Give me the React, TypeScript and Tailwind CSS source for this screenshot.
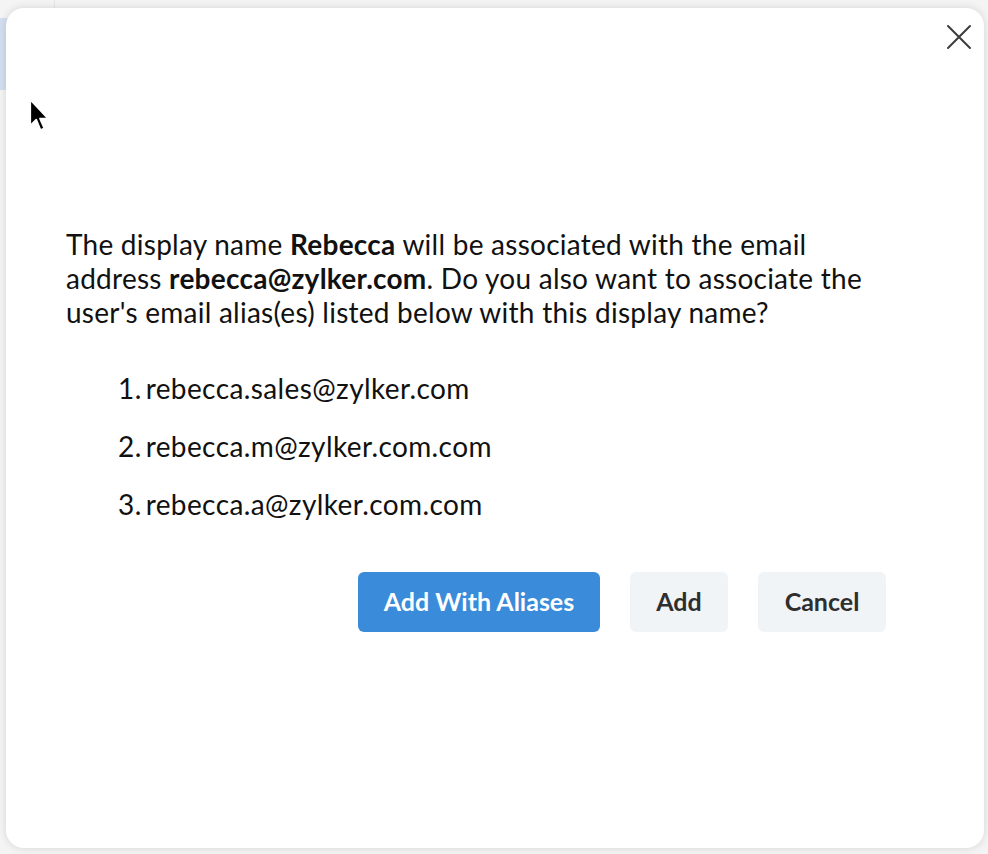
const aliases = [
  "rebecca.sales@zylker.com",
  "rebecca.m@zylker.com.com",
  "rebecca.a@zylker.com.com",
];

function Cursor() {
  return (
    <svg width="26" height="40" viewBox="0 0 24 36" className="absolute left-[27px] top-[97px]">
      <path
        d="M3 2 L3 26 L8.5 20.5 L12.5 30 L16 28.5 L12 19.5 L19.5 19.5 Z"
        fill="#000"
        stroke="#fff"
        strokeWidth="1.6"
        strokeLinejoin="round"
      />
    </svg>
  );
}

export default function App() {
  return (
    <div
      className="relative h-[854px] w-[988px] overflow-hidden bg-[#f4f4f4] pl-[6px] pt-[8px]"
      style={{ fontFamily: "Lato, 'Noto Sans', sans-serif" }}
    >
      {/* app behind the dialog */}
      <div className="absolute left-0 top-[18px] h-[72px] w-[10px] bg-[#d3dff0]" />
      <div className="absolute left-[54px] top-0 h-[10px] w-px bg-[#e6e6e6]" />

      <div className="relative flex h-[840px] w-[978px] flex-col rounded-[18px] bg-white shadow-[0_0_8px_rgba(0,0,0,0.13)]">
        <button className="absolute left-[940px] top-[16px]" aria-label="Close">
          <svg width="26" height="26" viewBox="0 0 26 26" fill="none" stroke="#3c3c3c" strokeWidth="2" strokeLinecap="round">
            <path d="M2 2 L24 24 M24 2 L2 24" />
          </svg>
        </button>

        <div className="pl-[60px] pt-[219px] text-[28px] leading-[34px] tracking-[0.25px] text-[#111]">
          <p className="w-[830px]">
            The display name <b>Rebecca</b> will be associated with the email address{" "}
            <b>rebecca@zylker.com</b>. Do you also want to associate the user's email alias(es)
            listed below with this display name?
          </p>

          <div className="mt-[42px] flex flex-col gap-[24px] pl-[52px] tracking-[0.4px]">
            {aliases.map((a, i) => (
              <div key={a} className="flex gap-[4px]">
                <span>{i + 1}.</span>
                <span>{a}</span>
              </div>
            ))}
          </div>
        </div>

        <div className="mt-[51px] flex gap-[30px] pl-[352px] text-[25px] font-bold">
          <button className="h-[60px] w-[242px] rounded-[6px] bg-[#3a8bd9] text-white">
            Add With Aliases
          </button>
          <button className="h-[60px] w-[98px] rounded-[6px] bg-[#f1f4f7] text-[#2e2e2e]">
            Add
          </button>
          <button className="h-[60px] w-[128px] rounded-[6px] bg-[#f1f4f7] text-[#2e2e2e]">
            Cancel
          </button>
        </div>
      </div>

      <Cursor />
    </div>
  );
}
